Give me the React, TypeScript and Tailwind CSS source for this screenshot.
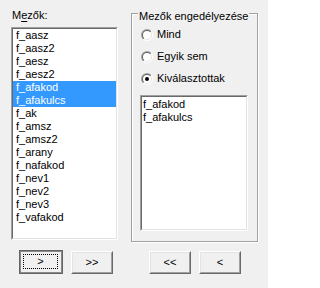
import React from "react";

const leftItems = [
  "f_aasz",
  "f_aasz2",
  "f_aesz",
  "f_aesz2",
  "f_afakod",
  "f_afakulcs",
  "f_ak",
  "f_amsz",
  "f_amsz2",
  "f_arany",
  "f_nafakod",
  "f_nev1",
  "f_nev2",
  "f_nev3",
  "f_vafakod",
];
const selected = new Set(["f_afakod", "f_afakulcs"]);

function Sunken({ className, children }: { className: string; children?: React.ReactNode }) {
  return (
    <div
      className={
        "border border-t-[#a0a0a0] border-l-[#a0a0a0] border-r-white border-b-white " + className
      }
    >
      <div className="h-full border border-t-[#696969] border-l-[#696969] border-r-[#e3e3e3] border-b-[#e3e3e3] bg-white overflow-hidden">
        {children}
      </div>
    </div>
  );
}

function Radio({ checked, label }: { checked?: boolean; label: string }) {
  return (
    <div className="flex h-[13px] items-center gap-[4px]">
      <svg width="12" height="12" viewBox="0 0 12 12" className="shrink-0">
        <defs>
          <linearGradient id="rg1" x1="0" y1="0" x2="1" y2="1">
            <stop offset="0.5" stopColor="#a0a0a0" />
            <stop offset="0.5" stopColor="#ffffff" />
          </linearGradient>
          <linearGradient id="rg2" x1="0" y1="0" x2="1" y2="1">
            <stop offset="0.5" stopColor="#696969" />
            <stop offset="0.5" stopColor="#e3e3e3" />
          </linearGradient>
        </defs>
        <circle cx="6" cy="6" r="6" fill="url(#rg1)" />
        <circle cx="6" cy="6" r="5" fill="url(#rg2)" />
        <circle cx="6" cy="6" r="4" fill="#ffffff" />
        {checked && <circle cx="6" cy="6" r="2" fill="#000000" />}
      </svg>
      <span>{label}</span>
    </div>
  );
}

function Btn({ label }: { label: string }) {
  return (
    <div className="mt-[1px] w-[42px] h-[23px] border border-t-white border-l-white border-r-[#696969] border-b-[#696969]">
      <div className="h-full flex items-center justify-center border border-t-[#e3e3e3] border-l-[#e3e3e3] border-r-[#a0a0a0] border-b-[#a0a0a0] bg-[#f0f0f0]">
        <span className="pb-[1px]">{label}</span>
      </div>
    </div>
  );
}

function DefaultBtn({ label }: { label: string }) {
  return (
    <div className="w-[44px] h-[24px] border border-[#646464]">
      <div className="h-full border border-[#8a8a8a] bg-[#f0f0f0] p-[2px] pr-[3px] pb-[3px]">
        <div className="h-full flex items-center justify-center border border-dotted border-black">
          <span className="pb-[1px]">{label}</span>
        </div>
      </div>
    </div>
  );
}

export default function App() {
  return (
    <div className="w-[268px] h-[288px] bg-[#f0f0f0] text-black text-[11px] leading-[13px] font-['Liberation_Sans',Arial,sans-serif] select-none">
      <div className="flex items-start pl-[11px] pt-[9px]">
        <div className="w-[107px] flex flex-col">
          <div className="h-[18px] pl-[1px]">
            M<span className="underline underline-offset-[2px]">e</span>zők:
          </div>
          <Sunken className="h-[213px]">
            <div className="flex flex-col">
              {leftItems.map((it) => (
                <div
                  key={it}
                  className={
                    "h-[13px] pl-[3px] whitespace-nowrap " +
                    (selected.has(it) ? "bg-[#3399ff] text-white" : "")
                  }
                >
                  {it}
                </div>
              ))}
            </div>
          </Sunken>
        </div>
        <div className="relative ml-[13px] mt-[4px] w-[127px] h-[229px] border border-[#a0a0a0] shadow-[inset_1px_1px_0_#ffffff,1px_1px_0_#ffffff]">
          <div className="absolute left-[6px] top-[-4px] bg-[#f0f0f0] px-[1px] whitespace-nowrap">
            Mezők engedélyezése
          </div>
          <div className="flex flex-col pl-[9px] pt-[14px]">
            <div className="flex flex-col gap-[9px]">
              <Radio label="Mind" />
              <Radio label="Egyik sem" />
              <Radio label="Kiválasztottak" checked />
            </div>
            <Sunken className="mt-[10px] ml-[-1px] w-[108px] h-[136px]">
              <div className="flex flex-col pt-[1px] pl-[1px]">
                <div className="h-[13px]">f_afakod</div>
                <div className="h-[13px]">f_afakulcs</div>
              </div>
            </Sunken>
          </div>
        </div>
      </div>
      <div className="flex items-start mt-[8px] pl-[19px]">
        <DefaultBtn label=">" />
        <div className="ml-[8px]">
          <Btn label=">>" />
        </div>
        <div className="ml-[36px]">
          <Btn label="<<" />
        </div>
        <div className="ml-[8px]">
          <Btn label="<" />
        </div>
      </div>
    </div>
  );
}
